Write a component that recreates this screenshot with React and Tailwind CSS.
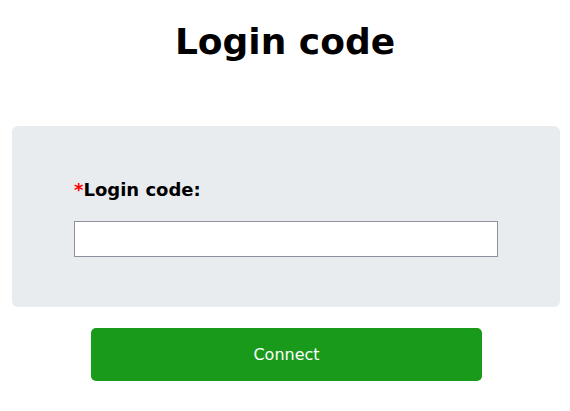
export default function App() {
  return (
    <div className="w-full min-h-[411px] bg-white font-['DejaVu_Sans',sans-serif] text-black">
      <h1 className="pt-[22px] text-center text-[36px] font-bold leading-[40px]">Login code</h1>
      <div className="ml-[12px] mr-[10px] mt-[64px] rounded-[6px] bg-[#e9ecef] px-[62px] pt-[54px] pb-[50px]">
        <label className="block text-[18px] font-bold leading-[20px]">
          <span className="text-[#ff0000]">*</span>Login code:
        </label>
        <input
          type="text"
          className="mt-[21px] block h-[36px] w-full border border-[#8f8f9d] bg-white px-2 text-[16px] outline-none"
        />
      </div>
      <button className="ml-[91px] mt-[21px] flex h-[53px] w-[391px] items-center justify-center rounded-[5px] bg-[#1a9a1a] text-[16px] leading-[20px] text-white">
        Connect
      </button>
    </div>
  );
}
